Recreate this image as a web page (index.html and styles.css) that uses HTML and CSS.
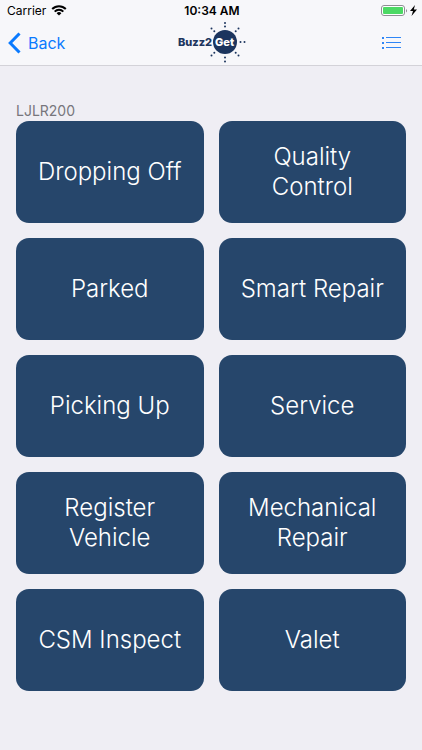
FILE: index.html
```
<!DOCTYPE html>
<html lang="en">
<head>
    <meta charset="UTF-8">
    <meta name="viewport" content="width=device-width, initial-scale=1.0">
    <title>Buzz2Get</title>
    <link rel="stylesheet" href="styles.css">
</head>
<body>
    <header class="header">
        <div class="status-bar">
            <div class="carrier">
                <span>Carrier</span>
                <svg width="16" height="12" viewBox="0 0 16 12" fill="none" stroke="#000" stroke-width="2">
                    <path d="M1.2 5a9.6 9.6 0 0 1 13.6 0"/>
                    <path d="M3.7 7.6a6 6 0 0 1 8.6 0"/>
                    <path d="M8 11.6L5.6 9.2a3.4 3.4 0 0 1 4.8 0z" fill="#000" stroke="none"/>
                </svg>
            </div>
            <div class="time">10:34 AM</div>
            <div class="battery">
                <svg width="36" height="12" viewBox="0 0 36 12">
                    <rect x="0.5" y="1.5" width="23" height="10" rx="2.5" fill="#fff" stroke="#8e8e93"/>
                    <rect x="2" y="3" width="20" height="7" rx="1" fill="#4cd964"/>
                    <path d="M25 5c1.4.6 1.4 2.9 0 3.5z" fill="#8e8e93"/>
                    <path d="M34 1l-5 6h3l-1.5 5L36 5.5h-3.2z" fill="#000"/>
                </svg>
            </div>
        </div>
        <nav class="nav-bar">
            <a class="back" href="#">
                <svg width="13" height="22" viewBox="0 0 13 22" fill="none" stroke="#0a7aff" stroke-width="3">
                    <path d="M11.5 1.5L2.2 11l9.3 9.5"/>
                </svg>
                <span>Back</span>
            </a>
            <svg class="logo" width="70" height="42" viewBox="0 0 70 42" role="img" aria-label="Buzz2Get">
                <circle cx="49" cy="20" r="12" fill="#1c355e"/>
                <g fill="#1c355e">
                    <circle cx="49" cy="1" r="1"/>
                    <circle cx="49" cy="4.5" r="1"/>
                    <circle cx="49" cy="35.5" r="1"/>
                    <circle cx="49" cy="39.5" r="1"/>
                    <circle cx="35.5" cy="6.5" r="1"/>
                    <circle cx="38.3" cy="9.3" r="1"/>
                    <circle cx="62.5" cy="6.5" r="1"/>
                    <circle cx="59.7" cy="9.3" r="1"/>
                    <circle cx="35.5" cy="33.5" r="1"/>
                    <circle cx="38.3" cy="30.7" r="1"/>
                    <circle cx="62.5" cy="33.5" r="1"/>
                    <circle cx="59.7" cy="30.7" r="1"/>
                    <circle cx="64.5" cy="20" r="1"/>
                    <circle cx="68.5" cy="20" r="1"/>
                </g>
                <text class="logo-text" x="2" y="24" fill="#1c355e">Buzz2</text>
                <text class="logo-text" x="39" y="24" fill="#fff">Get</text>
            </svg>
            <button class="menu" type="button" aria-label="Menu">
                <svg width="20" height="14" viewBox="0 0 20 14" fill="#2f86f6">
                    <path d="M0 1h2v2H0zM0 6h2v2H0zM0 11h2v2H0zM4 1h15v1H4zM4 6h15v1H4zM4 11h15v1H4z"/>
                </svg>
            </button>
        </nav>
    </header>

    <main class="content">
        <h1 class="title">LJLR200</h1>
        <div class="grid">
            <button class="card" type="button">Dropping Off</button>
            <button class="card" type="button">Quality Control</button>
            <button class="card" type="button">Parked</button>
            <button class="card" type="button">Smart Repair</button>
            <button class="card" type="button">Picking Up</button>
            <button class="card" type="button">Service</button>
            <button class="card" type="button">Register Vehicle</button>
            <button class="card" type="button">Mechanical Repair</button>
            <button class="card" type="button">CSM Inspect</button>
            <button class="card" type="button">Valet</button>
        </div>
    </main>
</body>
</html>
```
FILE: styles.css
```
* {
    box-sizing: border-box;
}
body {
    margin: 0;
    background-color: #efeef4;
    font-family: Inter, "Liberation Sans", sans-serif;
}
.header {
    background-color: #f7f7fa;
    border-bottom: 1px solid #d3d2d8;
}
.status-bar,
.nav-bar {
    display: grid;
    grid-template-columns: 1fr auto 1fr;
    align-items: center;
}
.status-bar {
    height: 22px;
    padding: 0 5px 2px 7px;
    font-size: 12px;
}
.carrier {
    display: flex;
    align-items: center;
    gap: 5px;
}
.time {
    font-weight: 600;
}
.battery {
    display: flex;
    justify-content: flex-end;
}
.nav-bar {
    height: 43px;
    padding: 0 8px 1px;
}
.back {
    display: flex;
    align-items: center;
    gap: 7px;
    color: #0a7aff;
    font-size: 16px;
    text-decoration: none;
}
.logo {
    display: block;
}
.logo-text {
    font-family: Inter, sans-serif;
    font-size: 11px;
    font-weight: 800;
}
.menu {
    display: flex;
    justify-self: end;
    margin-right: 12px;
    padding: 0;
    border: 0;
    background: none;
    cursor: pointer;
}
.content {
    padding: 36px 16px;
}
.title {
    margin: 0 0 2px;
    color: #77767c;
    font-size: 14px;
    font-weight: 400;
    line-height: 17px;
}
.grid {
    display: grid;
    grid-template-columns: 1fr 1fr;
    grid-auto-rows: 102px;
    gap: 15px;
}
.card {
    padding: 0 16px;
    border: 0;
    border-radius: 13px;
    background-color: #26466b;
    color: #fff;
    font-family: inherit;
    font-size: 24px;
    font-weight: 300;
    line-height: 30px;
    cursor: pointer;
}
```
